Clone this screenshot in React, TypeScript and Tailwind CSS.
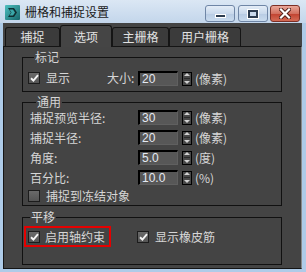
import React from "react";

const cjk = "font-['Noto_Sans_CJK_SC','Noto_Sans',sans-serif]";

function Check({ checked }: { checked: boolean }) {
  return (
    <span className="w-[12px] h-[12px] shrink-0 border border-[#1c1c1c] bg-[linear-gradient(#6a6a6a,#555555)] flex items-center justify-center">
      {checked && (
        <svg width="9" height="8" viewBox="0 0 9 8">
          <path d="M1 4.2 L3.4 6.5 L8 1.2" stroke="#f4f4f4" strokeWidth="1.9" fill="none" />
        </svg>
      )}
    </span>
  );
}

function Spinner() {
  return (
    <span className="w-[10px] h-[14px] shrink-0 border border-black bg-[#474747] flex flex-col items-center justify-center gap-[2px]">
      <svg width="6" height="3" viewBox="0 0 6 3">
        <path d="M0 3 L3 0 L6 3 Z" fill="#cfcfcf" />
      </svg>
      <span className="w-[6px] h-px bg-[#2a2a2a]" />
      <svg width="6" height="3" viewBox="0 0 6 3">
        <path d="M0 0 L6 0 L3 3 Z" fill="#cfcfcf" />
      </svg>
    </span>
  );
}

function Field({ value, unit }: { value: string; unit: string }) {
  return (
    <div className="flex items-center">
      <div className="w-[40px] h-[15px] bg-[#575757] border-t-2 border-l-2 border-t-black border-l-black border-b border-r border-b-[#606060] border-r-[#606060] pl-[2px] text-[12px] leading-[12px] text-[#e4e9f2] font-['Liberation_Sans',sans-serif]">
        {value}
      </div>
      <span className="ml-[4px]">
        <Spinner />
      </span>
      <span className="ml-[3px] text-[12px] leading-[14px] text-[#d6d6d6]">{unit}</span>
    </div>
  );
}

function Group({
  title,
  children,
  className,
}: {
  title: string;
  children: React.ReactNode;
  className: string;
}) {
  return (
    <fieldset className={"w-[260px] border border-[#111111] " + className}>
      <legend className="ml-[6px] px-[1px] text-[12px] leading-[14px] text-[#d6d6d6]">{title}</legend>
      {children}
    </fieldset>
  );
}

function Row({ label, value, unit }: { label: string; value: string; unit: string }) {
  return (
    <div className="h-[15px] flex items-center">
      <span className="w-[108px] text-[12px] leading-[14px] text-[#d6d6d6]">{label}</span>
      <Field value={value} unit={unit} />
    </div>
  );
}

function Tab({ label, w, selected }: { label: string; w: string; selected?: boolean }) {
  return (
    <div
      className={
        w +
        " flex items-center justify-center rounded-t-[3px] border border-[#151515] text-[12px] leading-[14px] text-[#e2e2e2] " +
        (selected
          ? "h-[22px] bg-[#454545] border-b-0 -mb-px relative z-10"
          : "h-[19px] bg-[#3b3b3b] border-b-0")
      }
    >
      {label}
    </div>
  );
}

export default function App() {
  return (
    <div className={"w-[306px] h-[272px] bg-[#aecbe8] flex flex-col " + cjk}>
      {/* title bar */}
      <div className="h-[23px] shrink-0 bg-[linear-gradient(#dbe7f4,#c3d6eb)] flex items-start relative">
        <div className="mt-[5px] ml-[5px] w-[15px] h-[15px]">
          <svg width="15" height="15" viewBox="0 0 15 15">
            <defs>
              <linearGradient id="ig" x1="0" y1="0" x2="1" y2="1">
                <stop offset="0" stopColor="#4fc0c0" />
                <stop offset="1" stopColor="#17666b" />
              </linearGradient>
            </defs>
            <rect x="0" y="0" width="15" height="15" rx="1" fill="url(#ig)" />
            <path d="M3 3 L9 3 L12 7.5 L9 12 L3 12 L6 7.5 Z" fill="#0f2f33" />
            <path d="M4.5 4.5 L8 4.5 L10 7.5 L8 10.5 L4.5 10.5 L6.5 7.5 Z" fill="#3aa7a9" />
          </svg>
        </div>
        <span className="ml-[5px] mt-[4px] text-[12px] leading-[16px] text-[#1a1a1a]">栅格和捕捉设置</span>
        <div className="ml-auto mr-[6px] mt-[5px] flex">
          <div className="w-[30px] h-[17px] rounded-[3px] border border-[#6f86a6] bg-[linear-gradient(#e4edf7,#c9d9ec_50%,#b7cbe3_51%,#c9dbee)] flex items-end justify-center pb-[3px]">
            <span className="w-[11px] h-[4px] bg-[#2c3c50] border border-white" />
          </div>
          <div className="ml-[3px] w-[30px] h-[17px] rounded-[3px] border border-[#6f86a6] bg-[linear-gradient(#e4edf7,#c9d9ec_50%,#b7cbe3_51%,#c9dbee)] flex items-center justify-center">
            <span className="w-[10px] h-[8px] border-2 border-[#2c3c50] outline outline-1 outline-white bg-[#c9d9ec]" />
          </div>
          <div className="ml-[2px] w-[30px] h-[17px] rounded-[3px] border border-[#7c2f26] bg-[linear-gradient(#eaa79a,#d2705f_50%,#c0412f_51%,#d46b55)] flex items-center justify-center">
            <svg width="12" height="11" viewBox="0 0 12 11">
              <path d="M2 1.5 L10 9.5 M10 1.5 L2 9.5" stroke="#4a1a14" strokeWidth="4" strokeLinecap="square" />
              <path d="M2 1.5 L10 9.5 M10 1.5 L2 9.5" stroke="#ffffff" strokeWidth="2.2" strokeLinecap="square" />
            </svg>
          </div>
        </div>
      </div>

      {/* client */}
      <div className="flex-1 ml-[3px] mr-[4px] mb-[3px] bg-[#444444] flex flex-col">
        <div className="h-[23px] pt-[2px] pl-[2px] flex items-end">
          <Tab label="捕捉" w="w-[55px]" />
          <Tab label="选项" w="w-[52px]" selected />
          <Tab label="主栅格" w="w-[57px]" />
          <Tab label="用户栅格" w="w-[72px]" />
        </div>
        <div className="flex-1 border border-[#151515] border-r-[#8a8a8a] bg-[#444444] pt-[3px] pl-[18px]">
          <Group title="标记" className="pt-[6px] pb-[5px] pl-[5px]">
            <div className="h-[16px] flex items-center">
              <Check checked />
              <span className="ml-[6px] w-[61px] text-[12px] leading-[14px] text-[#d6d6d6]">显示</span>
              <span className="w-[31px] text-[12px] leading-[14px] text-[#d6d6d6]">大小:</span>
              <span className="mt-[1px]">
                <Field value="20" unit="(像素)" />
              </span>
            </div>
          </Group>

          <Group title="通用" className="mt-[3px] pt-[1px] pb-[3px] pl-[7px]">
            <div className="flex flex-col gap-[5px]">
              <Row label="捕捉预览半径:" value="30" unit="(像素)" />
              <Row label="捕捉半径:" value="20" unit="(像素)" />
              <Row label="角度:" value="5.0" unit="(度)" />
              <Row label="百分比:" value="10.0" unit="(%)" />
            </div>
            <div className="mt-[4px] h-[13px] -ml-[2px] flex items-center">
              <Check checked={false} />
              <span className="ml-[6px] text-[12px] leading-[14px] text-[#d6d6d6]">捕捉到冻结对象</span>
            </div>
          </Group>

          <Group title="平移" className="mt-[4px] pt-[2px] pb-[17px] pl-[1px]">
            <div className="h-[21px] flex items-center">
              <div className="w-[87px] h-[21px] border-2 border-[#e50000] flex items-center pl-[2px]">
                <Check checked />
                <span className="ml-[5px] text-[12px] leading-[14px] text-[#d6d6d6]">启用轴约束</span>
              </div>
              <span className="ml-[26px]">
                <Check checked />
              </span>
              <span className="ml-[6px] text-[12px] leading-[14px] text-[#d6d6d6]">显示橡皮筋</span>
            </div>
          </Group>
        </div>
      </div>
    </div>
  );
}
